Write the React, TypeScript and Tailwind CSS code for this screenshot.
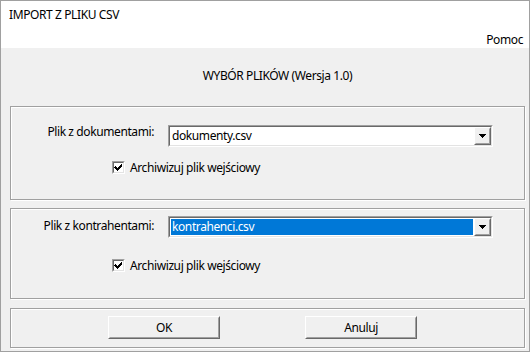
import React from "react";

function Sunken({ children, className }: { children: React.ReactNode; className?: string }) {
  return (
    <div className={"border border-t-[#a0a0a0] border-l-[#a0a0a0] border-r-white border-b-white " + (className ?? "")}>
      <div className="h-full w-full border border-t-[#696969] border-l-[#696969] border-r-[#e3e3e3] border-b-[#e3e3e3] bg-white flex">
        {children}
      </div>
    </div>
  );
}

function Raised({ children, className }: { children: React.ReactNode; className?: string }) {
  return (
    <div className={"border border-t-white border-l-white border-r-[#696969] border-b-[#696969] " + (className ?? "")}>
      <div className="h-full w-full border border-t-[#f0f0f0] border-l-[#f0f0f0] border-r-[#a0a0a0] border-b-[#a0a0a0] bg-[#f0f0f0] flex items-center justify-center">
        {children}
      </div>
    </div>
  );
}

function Combo({ value, selected }: { value: string; selected?: boolean }) {
  return (
    <Sunken className="w-[325px] h-[22px]">
      <div className="flex-1 p-[1px] flex">
        <div
          className={
            "flex-1 flex items-center pl-[1px] leading-[16px] " +
            (selected ? "bg-[#0078d7] text-white" : "text-black")
          }
        >
          {value}
        </div>
      </div>
      <Raised className="w-[17px] h-full">
        <svg width="7" height="4" viewBox="0 0 7 4" shapeRendering="crispEdges">
          <path d="M0 0h7v1h-1v1h-1v1h-1v1h-1v-1h-1v-1h-1v-1h-1z" fill="#000" />
        </svg>
      </Raised>
    </Sunken>
  );
}

function CheckBox() {
  return (
    <Sunken className="w-[13px] h-[13px] shrink-0">
      <svg width="9" height="9" viewBox="0 0 9 9" shapeRendering="crispEdges">
        <path
          d="M1 3h1v1h1v1h1v-1h1v-1h1v-1h1v-1h1v3h-1v1h-1v1h-1v1h-1v1h-1v-1h-1v-1h-1v-1h-1z"
          fill="#000"
        />
      </svg>
    </Sunken>
  );
}

function Group({ className, children }: { className?: string; children: React.ReactNode }) {
  return (
    <div
      className={
        "w-[515px] border border-[#a0a0a0] shadow-[inset_1px_1px_0_#ffffff,1px_1px_0_#ffffff] " + (className ?? "")
      }
    >
      {children}
    </div>
  );
}

function Button({ label }: { label: string }) {
  return (
    <Raised className="w-[112px] h-[23px]">
      <span className="leading-[16px]">{label}</span>
    </Raised>
  );
}

export default function App() {
  return (
    <div className="w-[530px] h-[352px] border border-[#a0a0a0] flex flex-col bg-[#f0f0f0] text-[12px] leading-[16px] tracking-[-0.4px] text-black font-['Noto_Sans',sans-serif] overflow-hidden">
      <div className="h-[47px] bg-white flex flex-col pt-[6px] pl-[8px] pr-[6px]">
        <div>IMPORT Z PLIKU CSV</div>
        <div className="mt-auto self-end">Pomoc</div>
      </div>
      <div className="flex-1 flex flex-col pl-[9px] pr-[4px]">
        <div className="mt-[20px] h-[16px] flex justify-center pl-[20px]">WYBÓR PLIKÓW (Wersja 1.0)</div>
        <Group className="mt-[22px] h-[94px] pt-[18px]">
          <div className="flex items-start">
            <div className="w-[143px] text-right mt-[-1px]">Plik z dokumentami:</div>
            <div className="ml-[14px]">
              <Combo value="dokumenty.csv" />
            </div>
          </div>
          <div className="mt-[14px] ml-[101px] h-[13px] flex items-center gap-[5px]">
            <CheckBox />
            <span>Archiwizuj plik wejściowy</span>
          </div>
        </Group>
        <Group className="mt-[8px] h-[91px] pt-[7px]">
          <div className="flex items-start">
            <div className="w-[143px] text-right mt-[2px]">Plik z kontrahentami:</div>
            <div className="ml-[14px]">
              <Combo value="kontrahenci.csv" selected />
            </div>
          </div>
          <div className="mt-[21px] ml-[101px] h-[13px] flex items-center gap-[5px]">
            <CheckBox />
            <span>Archiwizuj plik wejściowy</span>
          </div>
        </Group>
        <Group className="mt-[9px] h-[40px] pt-[7px]">
          <div className="flex ml-[97px] gap-[85px]">
            <Button label="OK" />
            <Button label="Anuluj" />
          </div>
        </Group>
      </div>
    </div>
  );
}
